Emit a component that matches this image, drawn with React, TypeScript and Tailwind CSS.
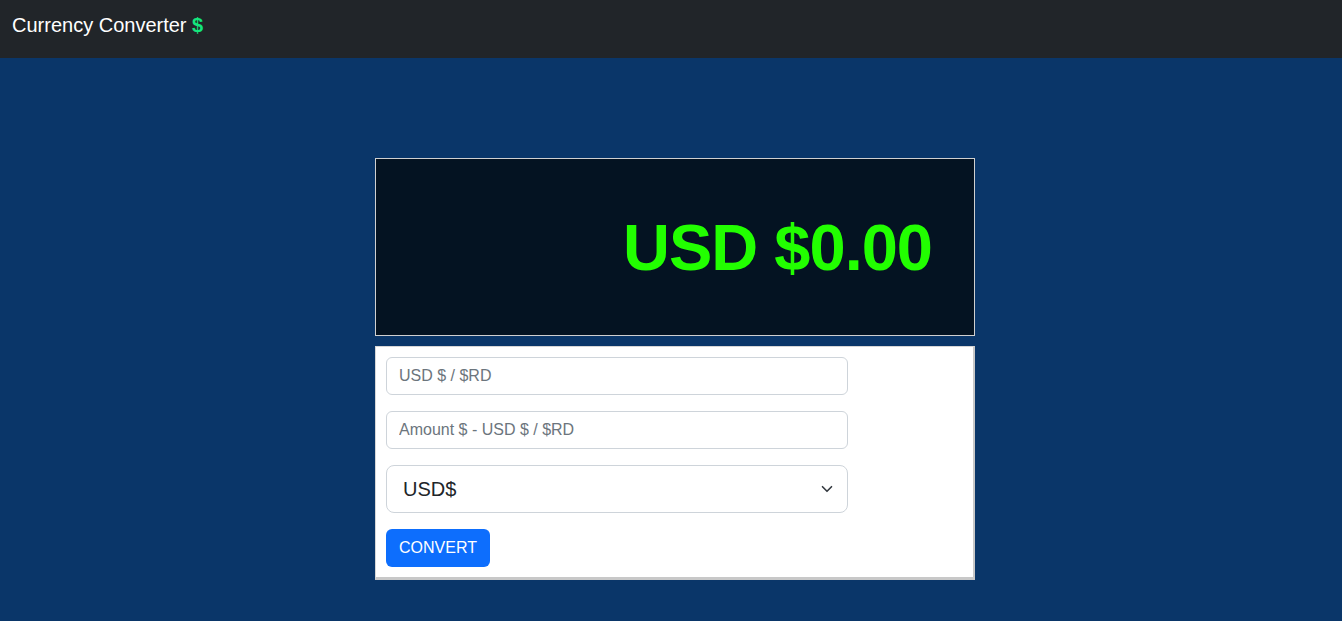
import { useState } from "react";

export default function App() {
  const [amount, setAmount] = useState("");
  const [rate, setRate] = useState("");
  const [currency, setCurrency] = useState("USD$");

  return (
    <div className="min-h-[621px] flex flex-col bg-[#0a3669] font-['Liberation_Sans',Arial,sans-serif]">
      {/* Navbar */}
      <nav className="h-[58px] bg-[#212529] flex items-center px-3 pb-2 shrink-0">
        <span className="text-[20px] text-white">
          Currency Converter <span className="font-bold text-[#14e67d]">$</span>
        </span>
      </nav>

      {/* Main */}
      <main className="flex-1 flex justify-center pt-[100px] pl-2">
        <div className="w-[600px] flex flex-col gap-[10px]">
          {/* Display */}
          <div className="h-[178px] bg-[#041322] border border-[#d0d0d0] flex items-center justify-end pr-[42px]">
            <span className="text-[65px] leading-none font-bold text-[#22ff00] tracking-[-1px]">
              USD $0.00
            </span>
          </div>

          {/* Form */}
          <div className="bg-white border border-[#d6d6d6] border-r-2 border-b-[3px] border-r-[#c8c8c8] border-b-[#c8c8c8] p-[10px] flex flex-col">
            <input
              value={rate}
              onChange={(e) => setRate(e.target.value)}
              placeholder="USD $ / $RD"
              className="w-[462px] h-[38px] px-3 rounded-[6px] border border-[#ced4da] text-[16px] text-[#212529] placeholder:text-[#6c757d] outline-none"
            />
            <input
              value={amount}
              onChange={(e) => setAmount(e.target.value)}
              placeholder="Amount $ - USD $ / $RD"
              className="mt-4 w-[462px] h-[38px] px-3 rounded-[6px] border border-[#ced4da] text-[16px] text-[#212529] placeholder:text-[#6c757d] outline-none"
            />
            <div className="mt-4 relative w-[462px]">
              <select
                value={currency}
                onChange={(e) => setCurrency(e.target.value)}
                className="appearance-none w-full h-[48px] pl-4 pr-10 rounded-[8px] border border-[#ced4da] bg-white text-[20px] text-[#212529] outline-none"
              >
                <option>USD$</option>
                <option>$RD</option>
              </select>
              <svg
                className="absolute right-[15px] top-1/2 -translate-y-1/2 pointer-events-none"
                width="12"
                height="12"
                viewBox="0 0 16 16"
                fill="none"
                stroke="#343a40"
                strokeWidth="2.2"
                strokeLinecap="round"
                strokeLinejoin="round"
              >
                <path d="m2 5 6 6 6-6" />
              </svg>
            </div>
            <div className="mt-4">
              <button className="h-[38px] px-[13px] rounded-[6px] bg-[#0d6efd] text-white text-[16px]">
                CONVERT
              </button>
            </div>
          </div>
        </div>
      </main>
    </div>
  );
}
